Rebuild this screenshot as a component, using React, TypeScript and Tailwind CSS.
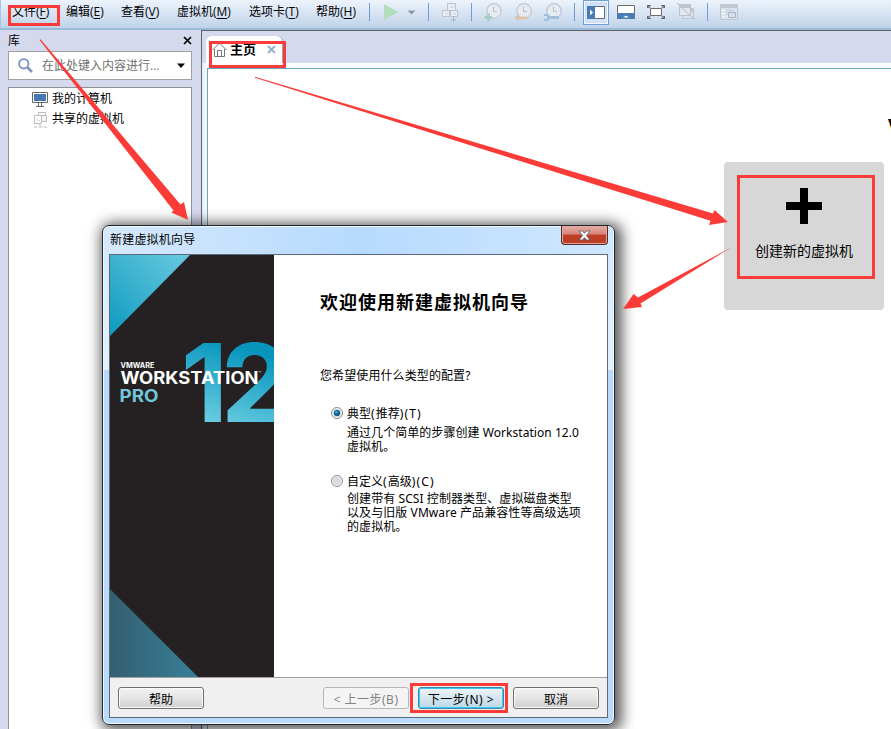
import type { ReactNode } from "react";

const UI = "font-['Open_Sans','Noto_Sans_CJK_SC',sans-serif]";
const DLG = "font-['Noto_Sans','Noto_Sans_CJK_SC',sans-serif]";

function MenuItem({ label, k, w }: { label: string; k: string; w: string }) {
  return (
    <div className={`${w} shrink-0 whitespace-nowrap text-[12px] leading-6`}>
      {label}(<span className="underline underline-offset-2">{k}</span>)
    </div>
  );
}

function Sep({ m }: { m: string }) {
  return <div className={`${m} h-[18px] w-px shrink-0 bg-[#729fd2]`} />;
}

function Icon({ m, children, w = 20 }: { m: string; children: ReactNode; w?: number }) {
  return (
    <svg className={`${m} shrink-0`} width={w} height={20} viewBox={`0 0 ${w} 20`} fill="none">
      {children}
    </svg>
  );
}

function Clock({ m, children }: { m: string; children: ReactNode }) {
  return (
    <Icon m={m}>
      <circle cx="11" cy="9" r="7.3" fill="#e6eaf1" stroke="#c2c8d0" strokeWidth="1.3" />
      <path d="M10.5 4.500V9.500H14" stroke="#b9bfc8" />
      {children}
    </Icon>
  );
}

function Toolbar() {
  return (
    <div className="h-[30px] shrink-0 overflow-hidden border-b-2 border-l border-b-[#9bb9d9] border-l-[#a9c5e5] bg-linear-to-b from-[#edf3fb] to-[#c0d3ea]">
      <div className="flex h-6 items-center pl-[11px]">
        <MenuItem label="文件" k="F" w="w-[54px]" />
        <MenuItem label="编辑" k="E" w="w-[55px]" />
        <MenuItem label="查看" k="V" w="w-[56px]" />
        <MenuItem label="虚拟机" k="M" w="w-[72px]" />
        <MenuItem label="选项卡" k="T" w="w-[67px]" />
        <MenuItem label="帮助" k="H" w="w-[53px]" />
        <Sep m="" />
        <Icon m="ml-[12px]" w={34}>
          <path d="M2 2L16 10L2 18Z" fill="#b3dcba" />
          <path d="M25.500 8.500h8l-4 4z" fill="#8995b1" />
        </Icon>
        <Sep m="ml-[12px]" />
        <Icon m="ml-[11px]">
          <g stroke="#bcc3cd" fill="#e9edf4">
            <path d="M7.500 1.500h8v7h-8zM2.500 8.500h7v6h-7zM10.500 8.500h7v6h-7z" />
            <path d="M10 4h4v2h-4zM5 10.500h3v2H5zM13 10.500h3v2h-3z" fill="#d9dee7" stroke="none" />
            <path d="M13.500 14v5M11 17l2.500 2.500L16 17" fill="none" stroke="#a9b3bf" />
          </g>
        </Icon>
        <Sep m="ml-[11px]" />
        <Clock m="ml-[11px]">
          <path d="M5.500 11.500v8M1.500 15.500h8" stroke="#a9c9c5" strokeWidth="2.5" />
        </Clock>
        <Clock m="ml-[10px]">
          <path d="M1 15.500l5-4v3h8v3H6v2z" fill="#dfc3af" />
        </Clock>
        <Clock m="ml-[10px]">
          <path d="M1 12h4l2 2h9v3H7l-2 2H1v-2h3v-3H1z" fill="#9fbfe0" />
        </Clock>
        <Sep m="ml-[11px]" />
        <div className="mt-px ml-[8px] flex h-[25px] w-[26px] shrink-0 items-center justify-center border border-[#729fd2] bg-[#d0e2f9] shadow-[inset_0_0_0_1px_#f2f7fd]">
          <Icon m="mt-px" w={18}>
            <path d="M.500 3.500h17v12H.500z" fill="#fff" stroke="#6a6a6a" />
            <path d="M0 3h8v13H0z" fill="#4a7bb2" />
            <path d="M3 6.500l3 3-3 3z" fill="#fff" />
          </Icon>
        </div>
        <Icon m="ml-[8px]" w={18}>
          <path d="M.500 3.500h17v9H.500z" fill="#fff" stroke="#6a6a6a" />
          <path d="M0 11h18v6H0z" fill="#4a7bb2" />
          <path d="M6 15.500l3-2 3 2z" fill="#fff" />
        </Icon>
        <Icon m="ml-[12px]" w={18}>
          <path d="M3.500 6.500h11v7h-11z" fill="#fff" stroke="#6a6a6a" />
          <path d="M.500 6V3.500H4M14 3.500h3.500V6M.500 14v2.500H4M14 16.500h3.500V14M1 4l2 2M17 4l-2 2M1 16l2-2M17 16l-2-2" stroke="#6a6a6a" strokeWidth="1.2" />
        </Icon>
        <Icon m="ml-[12px]" w={18}>
          <path d="M5.500 7.500h11v9h-11z" fill="#dae3ee" stroke="#bcc3cc" />
          <path d="M2.500 3.500h11v10h-11z" fill="#e2e9f3" stroke="#bcc3cc" />
          <path d="M2 2h12v4H2zM14 6h3v4h-3z" fill="#c0c6cf" />
          <path d="M0 1l18 17" stroke="#b0bdca" />
        </Icon>
        <Sep m="ml-[12px]" />
        <Icon m="ml-[12px]" w={18}>
          <path d="M.500 2.500h17v15H.500z" fill="#dce4ee" stroke="#bdc4cd" />
          <path d="M0 2h18v4H0z" fill="#c1c7d0" />
          <path d="M2 8.500h3M2 11.500h3M2 14.500h3" stroke="#f3f6fa" />
          <path d="M6 7h8v6H6z" fill="#c9dcf0" />
          <path d="M8.500 10.500h7v5h-7z" fill="#d6dfeb" stroke="#a9b5c4" />
        </Icon>
      </div>
    </div>
  );
}

function Sidebar() {
  return (
    <aside className="flex w-[201px] shrink-0 flex-col bg-[#d5d9ed] pr-[9px] pl-2">
      <div className="flex h-[21px] items-center justify-between">
        <span className="text-[12px]">库</span>
        <svg width="9" height="9" viewBox="0 0 9 9" stroke="#000" strokeWidth="1.7">
          <path d="M1 1l7 7M8 1L1 8" />
        </svg>
      </div>
      <div className="flex h-[29px] items-center border border-[#a0a0a0] bg-white pl-[9px]">
        <svg width="15" height="15" viewBox="0 0 15 15" fill="none" stroke="#7d93bd">
          <circle cx="5.800" cy="5.800" r="4.700" strokeWidth="1.8" />
          <path d="M9.500 9.500l4.500 4.500" strokeWidth="2.500" />
        </svg>
        <span className="ml-[9px] w-[135px] text-[12px] whitespace-nowrap text-[#6f6f6f]">在此处键入内容进行...</span>
        <svg width="8" height="5" viewBox="0 0 8 5">
          <path d="M0 .500h8L4 5z" />
        </svg>
      </div>
      <div className="mt-[7px] flex-1 border border-b-0 border-[#8e9198] bg-white pt-px pl-[23px]">
        <div className="flex h-5 items-center gap-1 text-[12px]">
          <svg width="16" height="16" viewBox="0 0 16 16" fill="none">
            <path d="M.500 1.500h15v10H.500z" fill="#fff" stroke="#666" />
            <path d="M2 3h12v7H2z" fill="#4679b4" />
            <path d="M6.500 12v3M9.500 12v3M4 15.500h8" stroke="#666" />
          </svg>
          我的计算机
        </div>
        <div className="flex h-5 items-center gap-1 text-[12px]">
          <svg width="16" height="17" viewBox="0 0 16 17" fill="#fff" stroke="#bcbcbc">
            <path d="M6.500 1.500h7v7h-7z" />
            <path d="M2.500 4.500h7v8h-7z" />
            <path d="M9.500 4.500h5v6h-5z" fill="#f3f3f3" />
            <path d="M5 6.500v3h3" stroke="#d5dfea" />
            <path d="M8 12v3M2 16h3M6.500 16h4M12 16h3" />
          </svg>
          共享的虚拟机
        </div>
      </div>
    </aside>
  );
}

function Main() {
  return (
    <main className="flex flex-1 flex-col overflow-hidden border-t border-l border-[#646464] bg-[#d5d9ed]">
      <div className="flex h-8 shrink-0 pt-[5px] pl-1">
        <div className="flex h-[27px] w-[77px] items-center rounded-t-md border-r border-[#7daec9] bg-white pl-[6px]">
          <svg width="15" height="15" viewBox="0 0 15 15" fill="none" stroke="#757575">
            <path d="M.500 8L7.500 1l7 7M2.500 7v7.500h10V7M5.500 14V8.500h4V14" />
          </svg>
          <span className="ml-[3px] w-[37px] text-[13px] font-bold whitespace-nowrap">主页</span>
          <svg width="9" height="9" viewBox="0 0 9 9" stroke="#8fb2cd" strokeWidth="2">
            <path d="M1 1l7 7M8 1L1 8" />
          </svg>
        </div>
      </div>
      <div className="flex flex-1 bg-linear-to-r from-[#e8ebf7] to-white to-[6px] pt-[5px] pl-[5px]">
        <div className="flex flex-1 flex-col items-end border-t border-l border-[#6aa5bf] bg-white pt-[44px]">
          <div className="h-6 w-[3px] overflow-hidden text-[24px] leading-[28px] font-bold">V</div>
          <div className="mt-[25px] mr-[7px] flex h-[148px] w-[160px] flex-col items-center rounded bg-[#d7d7d7] pt-[26px]">
            <svg width="36" height="36" viewBox="0 0 36 36">
              <path d="M14 0h8v14h14v8H22v14h-8V22H0v-8h14z" />
            </svg>
            <span className="mt-[17px] text-[14px] leading-5">创建新的虚拟机</span>
          </div>
        </div>
      </div>
    </main>
  );
}

function Banner() {
  return (
    <svg className="block shrink-0" width="164" height="422" viewBox="110 255 164 422">
      <defs>
        <linearGradient id="top" x1="0" y1="1" x2="1" y2="0">
          <stop offset="0" stopColor="#0c9ac0" />
          <stop offset=".45" stopColor="#38b0cd" />
          <stop offset="1" stopColor="#6acbe0" />
        </linearGradient>
        <linearGradient id="low" x1="0" y1="0" x2="1" y2="0">
          <stop offset="0" stopColor="#345f70" />
          <stop offset="1" stopColor="#387f98" />
        </linearGradient>
        <linearGradient id="num" gradientUnits="userSpaceOnUse" x1="250" y1="350" x2="225" y2="425">
          <stop offset="0" stopColor="#0795bd" />
          <stop offset="1" stopColor="#67cbe1" />
        </linearGradient>
      </defs>
      <path d="M110 255h164v422H110z" fill="#252122" />
      <path d="M110 255h80l-80 81z" fill="url(#top)" />
      <path d="M110 589l88 88h-88z" fill="url(#low)" />
      <g fontFamily="Inter, sans-serif" fontWeight="700">
        <text x="181" y="422" fontSize="109" fill="url(#num)">1</text>
        <text x="221" y="422" fontSize="109" fill="url(#num)">2</text>
        <text x="120.500" y="368" fontSize="7" fill="#fff" textLength="34" lengthAdjust="spacingAndGlyphs">VMWARE</text>
        <text x="120.500" y="384" fontSize="17" fill="#fff" textLength="138" lengthAdjust="spacingAndGlyphs">WORKSTATION</text>
        <text x="258.500" y="375" fontSize="4" fill="#fff">™</text>
        <text x="119.500" y="401.500" fontSize="17" fill="#70c6da" textLength="39" lengthAdjust="spacingAndGlyphs">PRO</text>
      </g>
    </svg>
  );
}

function Radio({ on }: { on?: boolean }) {
  return (
    <svg className="shrink-0" width="12" height="12" viewBox="0 0 12 12">
      <circle cx="6" cy="6" r="5.500" fill="#f2f2f2" stroke="#8b8d90" />
      <circle cx="6" cy="6" r="4" fill={on ? "#c7d9e5" : "#dcdcdc"} />
      {on && <circle cx="6" cy="6" r="3.100" fill="#155a86" />}
      {on && <circle cx="5.400" cy="5.200" r="1.300" fill="#3fb3e0" />}
    </svg>
  );
}

const BTN = "flex h-[22px] w-[86px] shrink-0 items-center justify-center rounded-[3px] border text-[12px] whitespace-nowrap pt-[3px]";
const NORMAL = "border-[#707070] bg-linear-to-b from-[#f3f3f3] via-[#e5e5e5] to-[#cfcfcf] shadow-[inset_0_0_0_1px_#fbfbfb]";

function Wizard() {
  return (
    <div className={`absolute top-[225px] left-[102px] flex h-[500px] w-[513px] flex-col rounded-[7px] border border-[#22282f] bg-linear-to-b from-[#d4e8fd] via-[#e3f1ff] via-29% to-[#b9dafb] to-29% px-[6px] pb-[6px] shadow-[inset_0_0_0_1px_#f0f8ff,3px_2px_14px_4px_rgba(0,0,0,0.65)] ${DLG}`}>
      <div className="-mx-[5px] mt-px flex h-[27px] shrink-0 justify-between rounded-t-[5px] bg-linear-to-r from-[#d6e9fc] via-[#b7dafd] via-50% to-[#d0e7ff] pl-[6px]">
        <span className="pt-1 text-[12px] leading-[18px] tracking-[0.2px]">新建虚拟机向导</span>
        <div className="-mt-px mr-[5px] flex h-[19px] w-[47px] items-center justify-center rounded-b-[4px] border border-t-0 border-[#542823] bg-linear-to-b from-[#e5ada5] via-[#d8847a] via-45% to-[#bd3d25] to-50% shadow-[inset_0_0_0_1px_#e4a69f]">
          <svg width="13" height="11" viewBox="0 0 13 11">
            <path d="M1 1h3.500l2 2.300L8.500 1H12L8.500 5.500 12 10H8.500l-2-2.300L4.500 10H1l3.500-4.500z" fill="#fff" stroke="#5b6070" strokeWidth=".9" />
          </svg>
        </div>
      </div>
      <div className="flex flex-1 flex-col overflow-hidden border border-[#5b6b7c] bg-white">
        <div className="flex h-[422px] shrink-0">
          <Banner />
          <div className="flex-1 pl-[46px] text-[12px]">
            <h1 className="mt-[35px] text-[18px] leading-6 font-bold tracking-[1px] whitespace-nowrap">欢迎使用新建虚拟机向导</h1>
            <p className="mt-[54px] leading-4 tracking-[0.1px]">您希望使用什么类型的配置?</p>
            <div className="mt-[21px] flex h-4 items-center gap-1 pl-[11px]">
              <Radio on />
              <span className="pt-px">
                典型<span className="tracking-[1px]">(</span>推荐<span className="tracking-[1.2px]">)(T)</span>
              </span>
            </div>
            <p className="mt-[5px] pl-[27px] leading-[14px] tracking-[0.05px] whitespace-nowrap">
              通过几个简单的步骤创建 Workstation 12.0
              <br />
              虚拟机。
            </p>
            <div className="mt-[19px] flex h-4 items-center gap-1 pl-[11px]">
              <Radio />
              <span className="pt-px">
                自定义<span className="tracking-[1px]">(</span>高级<span className="tracking-[1.2px]">)(C)</span>
              </span>
            </div>
            <p className="mt-[3px] pl-[27px] leading-[14px] tracking-[0.08px] whitespace-nowrap">
              创建带有 SCSI 控制器类型、虚拟磁盘类型
              <br />
              以及与旧版 VMware 产品兼容性等高级选项
              <br />
              的虚拟机。
            </p>
          </div>
        </div>
        <div className="flex flex-1 border-t border-[#a0a0a0] bg-[#f0f0f0] pt-[9px] pl-2">
          <div className={`${BTN} ${NORMAL}`}>帮助</div>
          <div className={`${BTN} ml-[119px] border-[#b4b8bb] bg-[#f4f4f4] tracking-[0.5px] text-[#838383]`}>&lt; 上一步(B)</div>
          <div className={`${BTN} ml-[9px] border-[#3a86aa] bg-linear-to-b from-[#eef5f9] to-[#bcd8e6] tracking-[0.5px] shadow-[inset_0_0_0_1px_#36cbf7]`}>下一步(N) &gt;</div>
          <div className={`${BTN} ml-[9px] ${NORMAL}`}>取消</div>
        </div>
      </div>
    </div>
  );
}

function Annotations() {
  return (
    <svg className="pointer-events-none absolute inset-0" width="891" height="729" viewBox="0 0 891 729">
      <g fill="none" stroke="#fb3b38" strokeWidth="3">
        <path d="M9.500 6.500h49v18h-49z" />
        <path d="M210.500 42.500h74v24h-74z" />
        <path d="M738.500 176.500h135v101h-135z" />
        <path d="M411.500 684.500h95v27h-95z" />
      </g>
      <g fill="#fb3b38">
        <path d="M39.500 40L40.500 39.300L180.500 204.500L184 202L188 220L171.500 212.500L173.500 210.500Z" />
        <path d="M255 76.700L255 77.700L710.500 220.800L709 225L728 222L714.500 210L713 213.500Z" />
        <path d="M732 247L638 297.500L633.500 294L623 309L642 307L640.500 303.500Z" />
      </g>
    </svg>
  );
}

export default function App() {
  return (
    <div className={`relative flex h-[729px] w-[891px] flex-col overflow-hidden bg-white text-black ${UI}`}>
      <Toolbar />
      <div className="flex flex-1">
        <Sidebar />
        <Main />
      </div>
      <Wizard />
      <Annotations />
    </div>
  );
}
